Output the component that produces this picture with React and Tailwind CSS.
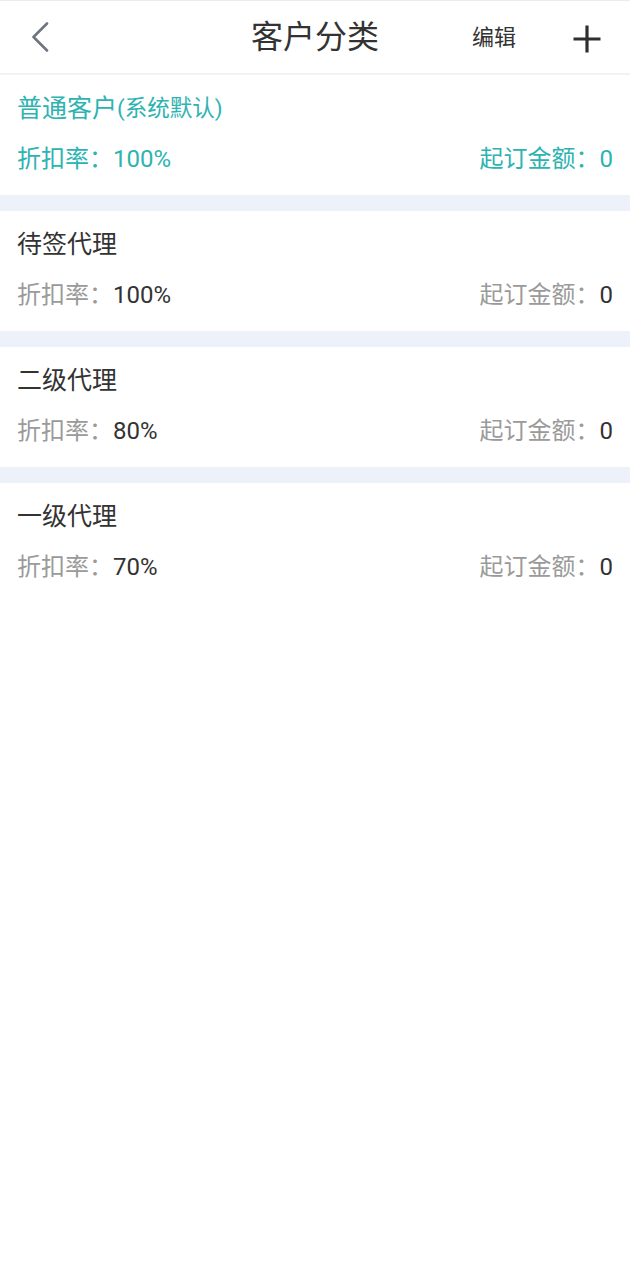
import React from "react";

const items = [
  { name: "普通客户", suffix: "(系统默认)", rate: "100%", min: "0", active: true },
  { name: "待签代理", rate: "100%", min: "0" },
  { name: "二级代理", rate: "80%", min: "0" },
  { name: "一级代理", rate: "70%", min: "0" },
];

function Card({ item }) {
  const teal = "text-[#2db3b1]";
  return (
    <div className="bg-white pl-[17px] pr-[17px] pt-[16px] pb-[18px]">
      <div className={`h-[36px] flex items-center text-[25px] ${item.active ? teal : "text-[#333333]"}`}>
        <span>{item.name}</span>
        {item.suffix && <span className="text-[22.5px]">{item.suffix}</span>}
      </div>
      <div className="mt-[14px] h-[36px] flex items-center justify-between text-[24px]">
        <div>
          <span className={item.active ? teal : "text-[#9a9a9a]"}>折扣率：</span>
          <span className={item.active ? teal : "text-[#333333]"}>{item.rate}</span>
        </div>
        <div>
          <span className={item.active ? teal : "text-[#9a9a9a]"}>起订金额：</span>
          <span className={item.active ? teal : "text-[#333333]"}>{item.min}</span>
        </div>
      </div>
    </div>
  );
}

export default function App() {
  return (
    <div
      className="w-[630px] min-h-[1280px] bg-white"
      style={{ fontFamily: 'Roboto, "Noto Sans CJK SC", sans-serif' }}
    >
      <div className="border-t border-[#ececec] border-b-2 border-b-[#f2f2f2] h-[75px] grid grid-cols-[1fr_auto_1fr] items-center">
        <div className="h-full flex items-center pl-[30px]">
          <svg width="20" height="30" viewBox="0 0 20 30" fill="none">
            <path d="M17 1.5 L3.5 15 L17 28.5" stroke="#6f7580" strokeWidth="2.6" strokeLinecap="round" strokeLinejoin="round" />
          </svg>
        </div>
        <div className="text-center text-[32px] text-[#333333]">客户分类</div>
        <div className="flex items-center justify-end h-full">
          <span className="text-[22px] text-[#333333] mr-[56px] mt-[1px]">编辑</span>
          <svg width="30" height="30" viewBox="0 0 30 30" className="mr-[28px] mt-[4px]">
            <path d="M15 1.5 V28.5 M1.5 15 H28.5" stroke="#2f2f2f" strokeWidth="3.2" />
          </svg>
        </div>
      </div>
      {items.map((item, i) => (
        <div key={i}>
          {i > 0 && <div className="h-[16px] bg-[#edf1fa]" />}
          <Card item={item} />
        </div>
      ))}
    </div>
  );
}
